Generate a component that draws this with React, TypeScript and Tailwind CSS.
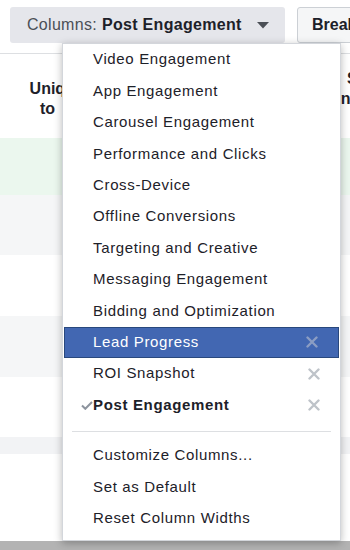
import { Fragment } from "react";

const presets = [
  "Video Engagement",
  "App Engagement",
  "Carousel Engagement",
  "Performance and Clicks",
  "Cross-Device",
  "Offline Conversions",
  "Targeting and Creative",
  "Messaging Engagement",
  "Bidding and Optimization",
];

const saved = [
  { label: "Lead Progress", active: true },
  { label: "ROI Snapshot" },
  { label: "Post Engagement", checked: true },
];

const actions = ["Customize Columns...", "Set as Default", "Reset Column Widths"];

function XIcon({ color }: { color: string }) {
  return (
    <svg width="12" height="12" viewBox="0 0 12 12" className="absolute right-[20px] top-1/2 -translate-y-1/2">
      <path d="M1.5 1.5 L10.5 10.5 M10.5 1.5 L1.5 10.5" stroke={color} strokeWidth="2.4" strokeLinecap="round" />
    </svg>
  );
}

function MenuRow({ label, active, checked, removable }: { label: string; active?: boolean; checked?: boolean; removable?: boolean }) {
  return (
    <div
      className={
        active
          ? "relative mx-px flex h-[31.4px] items-center border border-[#29487d] bg-[#4267b2] pl-[28px] text-white"
          : "relative flex h-[31.4px] items-center pl-[30px] text-[#1d2129]"
      }
    >
      {checked && (
        <svg width="12" height="9" viewBox="0 0 12 9" className="absolute left-[18px] top-[12px]">
          <path d="M1 4.5 L4.3 7.8 L11 1" fill="none" stroke="#8d949e" strokeWidth="2" />
        </svg>
      )}
      <span className={checked ? "font-bold" : ""}>{label}</span>
      {removable && <XIcon color={active ? "#8b9dc3" : "#bec3c9"} />}
    </div>
  );
}

export default function App() {
  return (
    <div className="relative h-[550px] w-[350px] overflow-hidden bg-white font-['Liberation_Sans',Arial,sans-serif] text-[#1d2129]">
      {/* toolbar */}
      <div className="flex gap-[12px] whitespace-nowrap pb-[10px] pl-[10px] pt-[7px]">
        <div className="flex h-[36px] w-[275px] shrink-0 items-center rounded-[3px] bg-[#e5e6eb] pl-[17px] text-[16px] tracking-[0.3px]">
          <span className="text-[#4b4f56]">Columns:</span>
          <span className="ml-[5px] font-bold">Post Engagement</span>
          <svg width="12" height="7" viewBox="0 0 12 7" className="ml-[15px]">
            <path d="M0 0 H12 L6 6.5 Z" fill="#4b4f56" />
          </svg>
        </div>
        <div className="flex h-[36px] shrink-0 items-center rounded-[3px] border border-[#ccd0d5] bg-[#f5f6f7] px-[14px] text-[16px] font-bold">
          Breakdown
        </div>
      </div>

      {/* table header */}
      <div className="flex h-[85px] items-center border-t border-[#dddfe2] pt-[6px] text-[16px] font-bold leading-[20px] whitespace-nowrap">
        <div className="w-[166px] shrink-0 pr-[1px] text-center">
          Unique Clicks
          <br />
          to&nbsp; Website
        </div>
        <div className="w-[142px] shrink-0 text-center">
          Link
          <br />
          Clicks
        </div>
        <div className="w-[120px] shrink-0 text-center">
          Sales
          <br />
          Conversions
          <br />
          to
        </div>
      </div>

      {/* table rows */}
      <div className="h-[57px] bg-[#ebf7ee]" />
      <div className="h-[60px] bg-[#f5f6f7]" />
      <div className="h-[61px] bg-white" />
      <div className="h-[61px] bg-[#f5f6f7]" />
      <div className="h-[60px] bg-white" />
      <div className="h-[17px] bg-[#f2f3f5]" />
      <div className="h-[87px] bg-white" />
      <div className="h-[10px] bg-[#b3b3b3]" />

      {/* columns dropdown */}
      <div className="absolute left-[62px] top-[43px] w-[279px] border border-[#d3d6db] bg-white pb-[6px] text-[15px] tracking-[0.65px] shadow-[0_2px_8px_rgba(0,0,0,0.28)] whitespace-nowrap">
        {presets.map((p) => (
          <MenuRow key={p} label={p} />
        ))}
        {saved.map((s) => (
          <Fragment key={s.label}>
            <MenuRow label={s.label} active={s.active} checked={s.checked} removable />
          </Fragment>
        ))}
        <div className="mx-[9px] mb-[8px] mt-[10px] h-px bg-[#dddfe2]" />
        {actions.map((a) => (
          <MenuRow key={a} label={a} />
        ))}
      </div>
    </div>
  );
}
